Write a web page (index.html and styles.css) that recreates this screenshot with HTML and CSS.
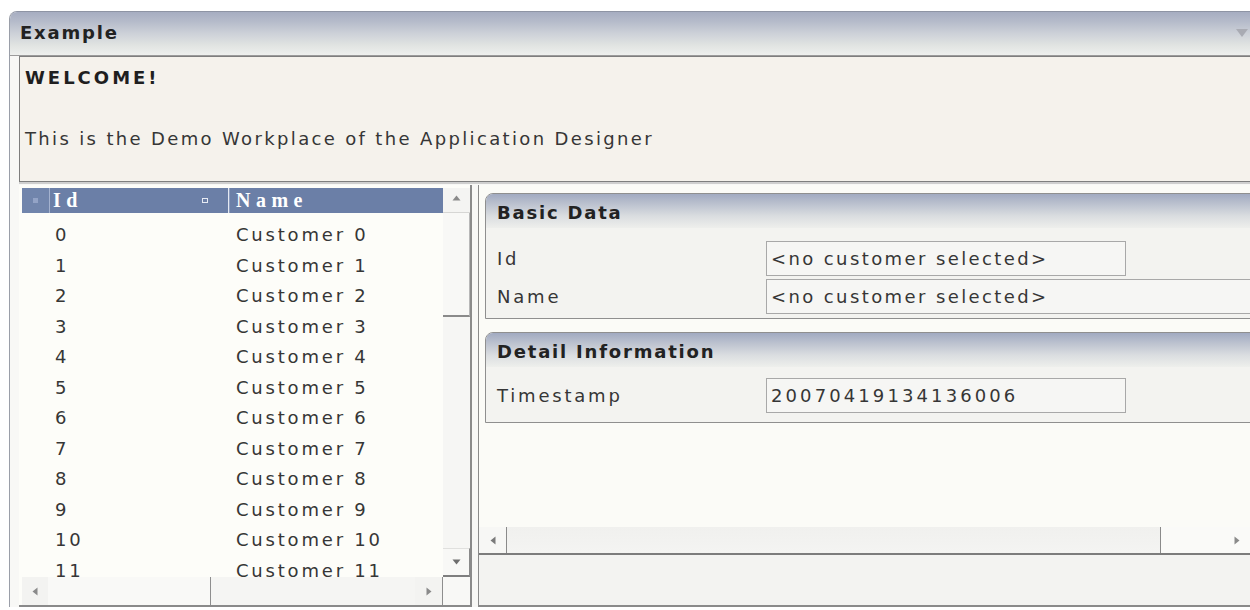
FILE: index.html
```html
<!DOCTYPE html>
<html lang="en">
<head>
<meta charset="utf-8">
<title>Example</title>
<link rel="stylesheet" href="styles.css">
</head>
<body>
<div class="window">
  <div class="titlebar">
    <span class="title">Example</span>
    <svg class="collapse" width="14" height="10" viewBox="0 0 14 10"><path d="M1 1h12L7 9z" fill="#a9abb3"/></svg>
  </div>
  <div class="content">
    <div class="welcome">
      <div class="welcome-head">WELCOME!</div>
      <div class="welcome-gap"></div>
      <div class="welcome-text">This is the Demo Workplace of the Application Designer</div>
    </div>
    <div class="split">
      <div class="list">
        <div class="grid">
          <div class="grid-head">
            <div class="hcell sel"><span class="dot"></span></div>
            <div class="hcell idcol"><span>Id</span><span class="sort"></span></div>
            <div class="hsep"></div>
            <div class="hcell namecol">Name</div>
          </div>
          <div class="grid-body">
            <div class="row"><span class="c-id">0</span><span class="c-name">Customer 0</span></div>
            <div class="row"><span class="c-id">1</span><span class="c-name">Customer 1</span></div>
            <div class="row"><span class="c-id">2</span><span class="c-name">Customer 2</span></div>
            <div class="row"><span class="c-id">3</span><span class="c-name">Customer 3</span></div>
            <div class="row"><span class="c-id">4</span><span class="c-name">Customer 4</span></div>
            <div class="row"><span class="c-id">5</span><span class="c-name">Customer 5</span></div>
            <div class="row"><span class="c-id">6</span><span class="c-name">Customer 6</span></div>
            <div class="row"><span class="c-id">7</span><span class="c-name">Customer 7</span></div>
            <div class="row"><span class="c-id">8</span><span class="c-name">Customer 8</span></div>
            <div class="row"><span class="c-id">9</span><span class="c-name">Customer 9</span></div>
            <div class="row"><span class="c-id">10</span><span class="c-name">Customer 10</span></div>
            <div class="row"><span class="c-id">11</span><span class="c-name">Customer 11</span></div>
          </div>
        </div>
        <div class="vscroll">
          <div class="vbtn up"><svg width="9" height="6" viewBox="0 0 9 6"><path d="M0.5 5.5L4.5 0.5 8.5 5.5z" fill="#8a8a8a"/></svg></div>
          <div class="vthumb"></div>
          <div class="vtrack"></div>
          <div class="vbtn down"><svg width="9" height="6" viewBox="0 0 9 6"><path d="M0.5 0.5h8L4.5 5.5z" fill="#6e6e6e"/></svg></div>
        </div>
        <div class="hscroll">
          <div class="hbtn left"><svg width="6" height="9" viewBox="0 0 6 9"><path d="M5.5 0.5v8L0.5 4.5z" fill="#8a8a8a"/></svg></div>
          <div class="hthumb"></div>
          <div class="htrack"></div>
          <div class="hbtn right"><svg width="6" height="9" viewBox="0 0 6 9"><path d="M0.5 0.5v8L5.5 4.5z" fill="#8a8a8a"/></svg></div>
        </div>
        <div class="corner"></div>
      </div>
      <div class="splitter"></div>
      <div class="detail">
        <div class="detail-body">
          <section class="group">
            <div class="group-head">Basic Data</div>
            <div class="group-body">
              <div class="field"><span class="label">Id</span><span class="value">&lt;no customer selected&gt;</span></div>
              <div class="field"><span class="label">Name</span><span class="value wide">&lt;no customer selected&gt;</span></div>
            </div>
          </section>
          <section class="group">
            <div class="group-head">Detail Information</div>
            <div class="group-body last">
              <div class="field"><span class="label">Timestamp</span><span class="value digits">20070419134136006</span></div>
            </div>
          </section>
        </div>
        <div class="dscroll">
          <div class="dbtn left"><svg width="6" height="9" viewBox="0 0 6 9"><path d="M5.5 0.5v8L0.5 4.5z" fill="#7a7a7a"/></svg></div>
          <div class="dthumb"></div>
          <div class="dbtn right"><svg width="6" height="9" viewBox="0 0 6 9"><path d="M0.5 0.5v8L5.5 4.5z" fill="#8a8a8a"/></svg></div>
        </div>
        <div class="status"></div>
      </div>
    </div>
  </div>
</div>
</body>
</html>
```

FILE: styles.css
```css
* {
  box-sizing: border-box;
}

html,
body {
  margin: 0;
  height: 100%;
}

body {
  background: #ffffff;
  overflow: hidden;
  font-family: "DejaVu Sans", Verdana, sans-serif;
  font-size: 18px;
  letter-spacing: 2.8px;
  color: #363636;
}

/* outer workplace window */
.window {
  margin: 11px 0 0 9px;
  width: 1260px;
  border-top: 1px solid #8e94a4;
  border-left: 1px solid #9a9ea8;
  border-top-left-radius: 8px;
  overflow: hidden;
  background: #f8f8f6;
}

.titlebar {
  height: 44px;
  display: flex;
  align-items: center;
  justify-content: space-between;
  padding: 0 20px 2px 10px;
  background: linear-gradient(#a6adc1 0%, #b5bbca 22%, #cdd1d8 50%, #e1e4e2 78%, #eef0ee 100%);
  border-bottom: 1px solid #9b9b9b;
  font-weight: bold;
  color: #222222;
  letter-spacing: 1.8px;
}

.content {
  padding-left: 9px;
}

/* welcome text box */
.welcome {
  height: 126px;
  border: 1px solid #7e7e7e;
  background: #f5f2ec;
  padding: 6px 5px;
  line-height: 30.5px;
  box-shadow: 0 2px 0 #cfcfcf;
}

.welcome-head {
  font-weight: bold;
  color: #1f1f1f;
  letter-spacing: 3px;
}

.welcome-gap {
  height: 30.5px;
}

.welcome-text {
  letter-spacing: 2.35px;
}

.split {
  margin-top: 3px;
  height: 422px;
  display: flex;
  background: #ffffff;
}

/* customer list */
.list {
  width: 453px;
  flex: none;
  padding: 3px 0 0 3px;
  border-right: 2px solid #8a8a8a;
  border-bottom: 2px solid #8a8a8a;
  display: grid;
  grid-template-columns: 421px 27px;
  grid-template-rows: 389px 28px;
  background: #fdfdf9;
}

.grid {
  overflow: hidden;
  display: flex;
  flex-direction: column;
}

.grid-head {
  height: 25px;
  flex: none;
  display: grid;
  grid-template-columns: 28px 178px 2px 1fr;
  background: #6b7fa7;
  color: #ffffff;
  font-family: "Liberation Serif", "Times New Roman", serif;
  font-weight: bold;
  font-size: 20px;
  letter-spacing: 5.5px;
  line-height: 25px;
}

.hcell.sel {
  display: flex;
  align-items: center;
  justify-content: center;
  background: #7185ac;
  border-right: 1px solid #a4b2cf;
}

.dot {
  width: 5px;
  height: 5px;
  background: #93a3c6;
}

.hcell.idcol {
  display: flex;
  align-items: center;
  justify-content: space-between;
  padding: 0 20px 0 3px;
}

.sort {
  width: 6px;
  height: 5px;
  border: 1px solid #e6eaf3;
}

.hsep {
  background: linear-gradient(to right, #e4e9f2 1px, #8d9dbf 1px);
}

.hcell.namecol {
  padding-left: 6px;
}

.grid-body {
  padding-top: 7px;
}

.row {
  height: 30.5px;
  line-height: 30.5px;
  display: grid;
  grid-template-columns: 28px 180px 1fr;
  white-space: nowrap;
}

.c-id {
  grid-column: 2;
  padding-left: 5px;
}

.c-name {
  grid-column: 3;
  padding-left: 6px;
}

/* scrollbars */
.vscroll {
  display: flex;
  flex-direction: column;
  background: #f4f4f2;
}

.vbtn {
  display: flex;
  align-items: center;
  justify-content: center;
}

.vbtn.up {
  height: 25px;
  border-bottom: 1px solid #d6d6d4;
  padding-bottom: 4px;
}

.vthumb {
  height: 104px;
  background: #f8f8f6;
  border-right: 1px solid #b8b8b8;
  border-bottom: 2px solid #8a8a8a;
}

.vtrack {
  flex: 1;
  background: #f6f6f4;
}

.vbtn.down {
  height: 29px;
  border-top: 1px solid #e0e0de;
  border-bottom: 2px solid #7e7e7e;
  border-right: 1px solid #8a8a8a;
  background: #f8f8f6;
}

.hscroll {
  display: flex;
  background: #f3f3f1;
}

.hbtn {
  display: flex;
  align-items: center;
  justify-content: center;
}

.hbtn.left {
  width: 26px;
}

.hthumb {
  width: 163px;
  background: #f9f9f7;
  border-right: 1px solid #8e8e8e;
}

.htrack {
  flex: 1;
  background: #f5f5f3;
}

.hbtn.right {
  width: 28px;
  border-right: 1px solid #8e8e8e;
}

.corner {
  background: #f8f8f6;
}

.splitter {
  width: 6px;
  flex: none;
  background: #f7f7f5;
}

/* detail panel */
.detail {
  flex: 1;
  display: flex;
  flex-direction: column;
  border-left: 1px solid #8a8a8a;
  border-bottom: 2px solid #8a8a8a;
  background: #fbfbf7;
}

.detail-body {
  flex: 1;
  padding: 8px 0 0 6px;
  overflow: hidden;
}

.group {
  width: 840px;
  border: 1px solid #8f8f8f;
  border-top-left-radius: 8px;
  overflow: hidden;
  background: #f3f3f0;
}

.group + .group {
  margin-top: 13px;
}

.group-head {
  height: 34px;
  padding: 4px 0 0 11px;
  line-height: 30px;
  font-weight: bold;
  color: #222222;
  letter-spacing: 1.8px;
  background: linear-gradient(#a1aac1 0%, #bcc2cf 30%, #dadde0 65%, #eeefec 100%);
}

.group-body {
  padding: 11px 0 3px 11px;
}

.group-body.last {
  padding: 9px 0 8px 11px;
}

.field {
  height: 38px;
  display: flex;
  align-items: center;
}

.label {
  width: 269px;
  flex: none;
}

.value {
  width: 360px;
  height: 35px;
  flex: none;
  border: 1px solid #a8a8a8;
  background: #f6f6f4;
  padding-left: 4px;
  line-height: 33px;
  white-space: nowrap;
  letter-spacing: 2.4px;
}

.value.wide {
  width: 560px;
  border-right: none;
}

.value.digits {
  letter-spacing: 3.1px;
}

.dscroll {
  height: 28px;
  flex: none;
  display: flex;
  background: #f2f2f0;
  border-bottom: 2px solid #7c7c7c;
}

.dbtn {
  display: flex;
  align-items: center;
}

.dbtn.left {
  width: 28px;
  justify-content: center;
  border-right: 1px solid #8a8a8a;
  background: #f7f7f5;
}

.dthumb {
  width: 654px;
  background: linear-gradient(#f0f0ee, #f4f4f2);
  border-right: 1px solid #8a8a8a;
}

.dbtn.right {
  flex: 1;
  padding-left: 73px;
  background: #fafaf8;
}

.status {
  height: 50px;
  flex: none;
  background: #f3f3f1;
}
```
